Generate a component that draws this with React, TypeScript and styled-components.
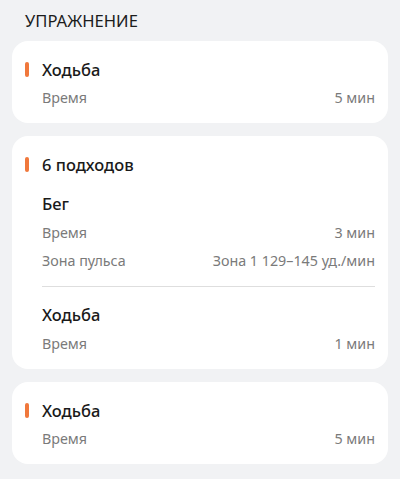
import React from "react";
import styled, { createGlobalStyle } from "styled-components";

type Row = { label: string; value: string };

type Block = { name: string; rows: Row[] };

const GlobalStyle = createGlobalStyle`
  body {
    margin: 0;
    background: #f1f2f4;
    font-family: "Noto Sans", Roboto, sans-serif;
  }
`;

const Page = styled.div`
  padding: 10px 12px 16px;
`;

const Header = styled.div`
  padding-left: 13px;
  font-size: 16.6px;
  line-height: 22px;
  color: #1c1c1c;
  margin-bottom: 9px;
`;

const Card = styled.div`
  background: #ffffff;
  border-radius: 16px;
  padding: 16px 13px 15px;
  & + & {
    margin-top: 13px;
  }
`;

const TitleRow = styled.div`
  display: flex;
  align-items: center;
  gap: 13px;
  height: 24px;
`;

const Marker = styled.span`
  width: 4px;
  height: 15px;
  border-radius: 2px;
  background: #f0783c;
`;

const Title = styled.div`
  font-size: 16.5px;
  font-weight: 500;
  color: #1a1a1a;
`;

const Body = styled.div<{ $top: number }>`
  padding-left: 17px;
  margin-top: ${(p) => p.$top}px;
`;

const SubTitle = styled.div`
  font-size: 16.5px;
  font-weight: 500;
  line-height: 24px;
  color: #1a1a1a;
`;

const Info = styled.div<{ $first?: boolean }>`
  display: flex;
  justify-content: space-between;
  font-size: 14.3px;
  line-height: 20px;
  color: #7a7a7a;
  margin-top: ${(p) => (p.$first ? 7 : 8)}px;
`;

const Divider = styled.div`
  height: 1px;
  background: #dedede;
  margin: 15px 0 16px;
`;

const Rows = ({ rows }: { rows: Row[] }) => (
  <>
    {rows.map((r, i) => (
      <Info key={i} $first={i === 0}>
        <span>{r.label}</span>
        <span>{r.value}</span>
      </Info>
    ))}
  </>
);

const walk = (min: number): Block => ({
  name: "Ходьба",
  rows: [{ label: "Время", value: `${min} мин` }],
});

const SimpleCard = ({ block }: { block: Block }) => (
  <Card>
    <TitleRow>
      <Marker />
      <Title>{block.name}</Title>
    </TitleRow>
    <Body $top={0}>
      <Rows rows={block.rows} />
    </Body>
  </Card>
);

const sets: Block[] = [
  {
    name: "Бег",
    rows: [
      { label: "Время", value: "3 мин" },
      { label: "Зона пульса", value: "Зона 1 129–145 уд./мин" },
    ],
  },
  walk(1),
];

export default function App() {
  return (
    <>
      <GlobalStyle />
      <Page>
        <Header>УПРАЖНЕНИЕ</Header>
        <SimpleCard block={walk(5)} />
        <Card>
          <TitleRow>
            <Marker />
            <Title>6 подходов</Title>
          </TitleRow>
          <Body $top={16}>
            {sets.map((b, i) => (
              <React.Fragment key={i}>
                {i > 0 && <Divider />}
                <SubTitle>{b.name}</SubTitle>
                <Rows rows={b.rows} />
              </React.Fragment>
            ))}
          </Body>
        </Card>
        <SimpleCard block={walk(5)} />
      </Page>
    </>
  );
}
